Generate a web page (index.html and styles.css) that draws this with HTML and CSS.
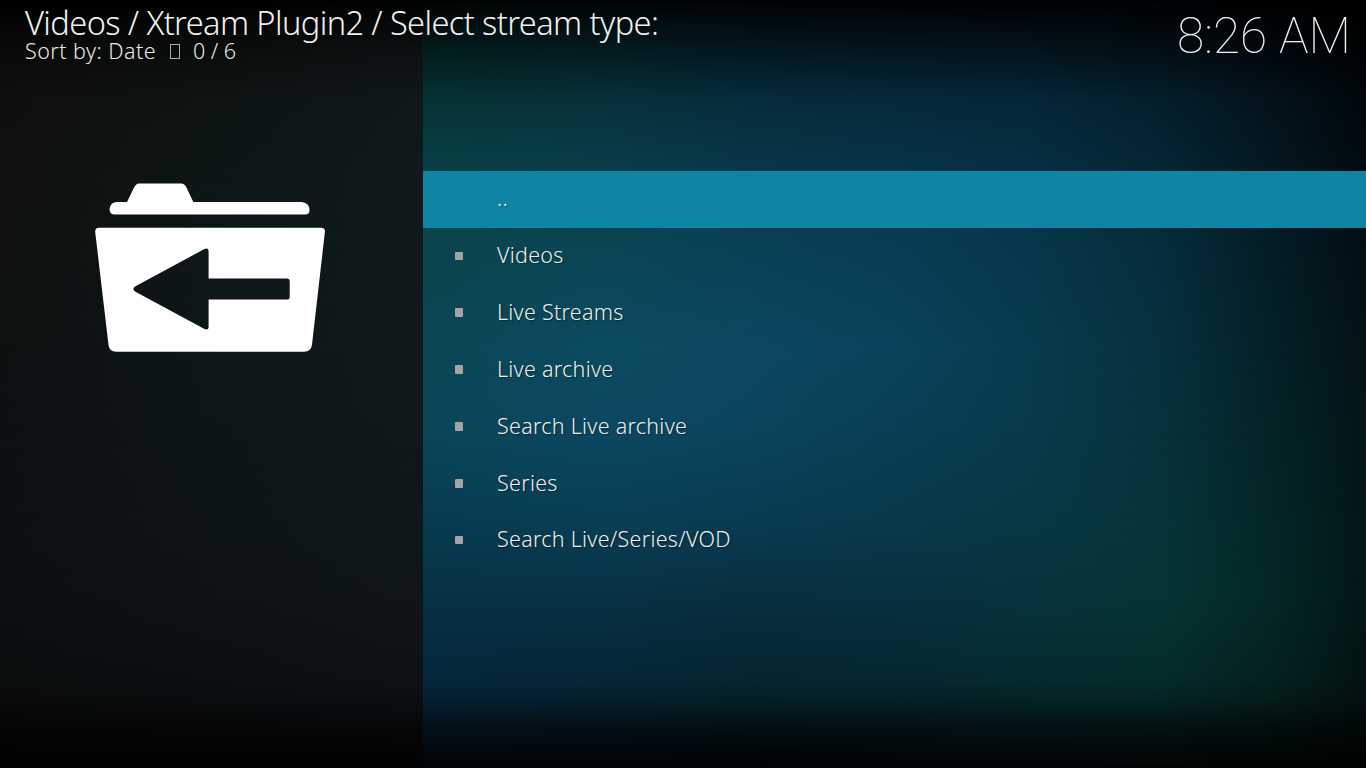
FILE: index.html
```html
<!DOCTYPE html>
<html lang="en">
<head>
<meta charset="utf-8">
<title>Videos</title>
<link rel="stylesheet" href="styles.css">
</head>
<body>
<div class="screen">
  <div class="backdrop">
    <i class="band b0"></i><i class="band b1"></i><i class="band b2"></i><i class="band b3"></i><i class="band b4"></i><i class="band b5"></i><i class="band b6"></i><i class="band b7"></i><i class="band b8"></i><i class="band b9"></i>
  </div>
  <header class="topbar">
    <div class="heading">
      <h1 class="title">Videos / Xtream Plugin2 / Select stream type:</h1>
      <p class="status"><span class="sort">Sort by: Date</span><span class="missing"></span><span class="count">0 / 6</span></p>
    </div>
    <time class="clock">8:26 AM</time>
  </header>
  <main class="content">
    <aside class="side">
      <svg class="folder" width="232" height="172" viewBox="94 182 232 172">
        <path fill="#fff" d="M115 214.5Q109.500 214.500 109.500 209Q110.500 202 117 202H127L133.500 188.500Q136 183.500 139 183.500H181Q184.500 183.500 186.500 187.500L193.300 202H302Q309.500 203 309.500 210Q309.500 214.500 305 214.500Z"/>
        <path fill="#fff" fill-rule="evenodd" d="M99 227.800H321Q325.300 227.800 324.900 232L312 344.500Q311 351.800 304 351.800H116Q109.500 351.800 108.500 345L95.200 232Q95 227.800 99 227.800ZM135 286.500Q131.800 289 135 291.500L204.500 329Q208.600 330.500 208.600 326.500V299.500H287.500Q289.700 299.500 289.700 297V281Q289.700 278.500 287.500 278.500H208.600V251.500Q208.600 247.500 204.500 249Z"/>
      </svg>
    </aside>
    <ul class="list">
      <li class="item selected"><span class="label">..</span></li>
      <li class="item"><i class="dot"></i><span class="label">Videos</span></li>
      <li class="item"><i class="dot"></i><span class="label">Live Streams</span></li>
      <li class="item"><i class="dot"></i><span class="label">Live archive</span></li>
      <li class="item"><i class="dot"></i><span class="label">Search Live archive</span></li>
      <li class="item"><i class="dot"></i><span class="label">Series</span></li>
      <li class="item"><i class="dot"></i><span class="label">Search Live/Series/VOD</span></li>
    </ul>
  </main>
</div>
</body>
</html>
```
FILE: styles.css
```css
* { box-sizing: border-box; margin: 0; padding: 0; }
body { background: #000; overflow: hidden; }
.screen {
  width: 1366px; height: 768px;
  display: grid; grid-template: 1fr / 1fr;
  font-family: "Noto Sans", "Open Sans", sans-serif; font-weight: 300; color: #f0f0f0;
}
.backdrop, .topbar, .content { grid-area: 1 / 1; z-index: 1; }
.backdrop { display: grid; z-index: 0; }

/* Each band is a horizontal ramp that fades in over the previous one between two heights. */
.band {
  grid-area: 1 / 1;
  background: linear-gradient(90deg, var(--l0), var(--l1) 200px, var(--l2) 423px, var(--c0) 423px, var(--c1) 600px, var(--c2) 750px, var(--c3) 900px, var(--c4) 1030px, var(--c5) 1160px, var(--c6) 1275px, var(--c7) 1366px);
  -webkit-mask-image: linear-gradient(180deg, transparent var(--from), #000 var(--to));
  mask-image: linear-gradient(180deg, transparent var(--from), #000 var(--to));
}
.b0 { -webkit-mask-image: none; mask-image: none; --l0:#000; --l1:#000; --l2:#010202; --c0:#000302; --c1:#000404; --c2:#000304; --c3:#000204; --c4:#000204; --c5:#000102; --c6:#000001; --c7:#000; }
.b1 { --from:0px; --to:50px; --l0:#0a0a0a; --l1:#0a0c0c; --l2:#0c1011; --c0:#031c1b; --c1:#041b20; --c2:#03171f; --c3:#03151e; --c4:#03131b; --c5:#020e14; --c6:#01070b; --c7:#000304; }
.b2 { --from:50px; --to:100px; --l0:#0f0f0e; --l1:#0e1313; --l2:#10181a; --c0:#063334; --c1:#073139; --c2:#062c3b; --c3:#06293b; --c4:#052738; --c5:#041f2b; --c6:#03121b; --c7:#01080c; }
.b3 { --from:100px; --to:165px; --l0:#0f100f; --l1:#0e1515; --l2:#10191c; --c0:#084044; --c1:#083d49; --c2:#073648; --c3:#073246; --c4:#062e42; --c5:#052634; --c6:#031720; --c7:#010b10; }
.b4 { --from:165px; --to:240px; --l0:#0f1010; --l1:#0e1617; --l2:#10191b; --c0:#0a454d; --c1:#0b4554; --c2:#0a4055; --c3:#093c54; --c4:#07364b; --c5:#052d3c; --c6:#041c25; --c7:#020e14; }
.b5 { --from:240px; --to:350px; --l0:#0d1011; --l1:#0e1618; --l2:#10191b; --c0:#0b4653; --c1:#0b4b60; --c2:#0c4762; --c3:#0b425c; --c4:#083b4e; --c5:#06313d; --c6:#042027; --c7:#031317; }
.b6 { --from:350px; --to:430px; --l0:#0d1012; --l1:#0e1517; --l2:#10181a; --c0:#0b4658; --c1:#0b4861; --c2:#0c445e; --c3:#0a3e55; --c4:#083a4b; --c5:#06323b; --c6:#042327; --c7:#031517; }
.b7 { --from:430px; --to:530px; --l0:#0c1012; --l1:#0e1416; --l2:#10171a; --c0:#083a4e; --c1:#093d53; --c2:#093a50; --c3:#08384a; --c4:#073742; --c5:#053438; --c6:#042627; --c7:#031617; }
.b8 { --from:530px; --to:600px; --l0:#0c0f11; --l1:#0d1215; --l2:#0f1519; --c0:#063045; --c1:#073144; --c2:#082e3e; --c3:#07303e; --c4:#06333b; --c5:#053434; --c6:#042726; --c7:#021616; }
.b9 { --from:600px; --to:690px; --l0:#0a0c0d; --l1:#0b0e10; --l2:#0d1114; --c0:#05263a; --c1:#062535; --c2:#05242e; --c3:#05262e; --c4:#05292d; --c5:#052a2a; --c6:#04201e; --c7:#021211; }
/* Darkens the bottom edge */
.backdrop::after { content: ""; grid-area: 1 / 1; z-index: 2; background: linear-gradient(180deg, transparent 680px, rgba(0,0,0,.18) 700px, rgba(0,0,0,.6) 728px, rgba(0,0,0,.93) 768px); }

.topbar { display: flex; justify-content: space-between; align-items: flex-start; padding: 6px 15px 0 25px; height: 80px; }
.title { font-size: 32.600px; font-weight: 300; line-height: 34px; letter-spacing: -.6px; white-space: nowrap; }
.status { display: flex; align-items: center; font-size: 21.500px; line-height: 22px; white-space: nowrap; color: #e8e8e8; }
.sort { letter-spacing: .45px; }
.missing { width: 10px; height: 15px; border: 1px solid #aaa; margin: 0 13px 0 14px; }
.count { letter-spacing: -.05px; }
.clock { font-family: Roboto, sans-serif; font-weight: 100; font-size: 49.500px; line-height: 60px; white-space: nowrap; }

.content { display: grid; grid-template-columns: 423px 1fr; padding-top: 171px; }
.side { padding: 11px 0 0 94px; }
.folder { display: block; }
.list { list-style: none; font-size: 21.500px; letter-spacing: .27px; }
.item { display: flex; align-items: flex-start; height: 56.900px; padding-left: 32px; }
.selected { background: #0f85a5; padding-left: 74px; }
.dot { width: 8px; height: 8.400px; border-radius: 1px; background: #a5a3a3; margin: 23.700px 34px 0 0; }
.label { margin-top: 12.080px; line-height: 30px; white-space: nowrap; text-shadow: 1px 1px 1px rgba(0,0,0,.4); }
```
